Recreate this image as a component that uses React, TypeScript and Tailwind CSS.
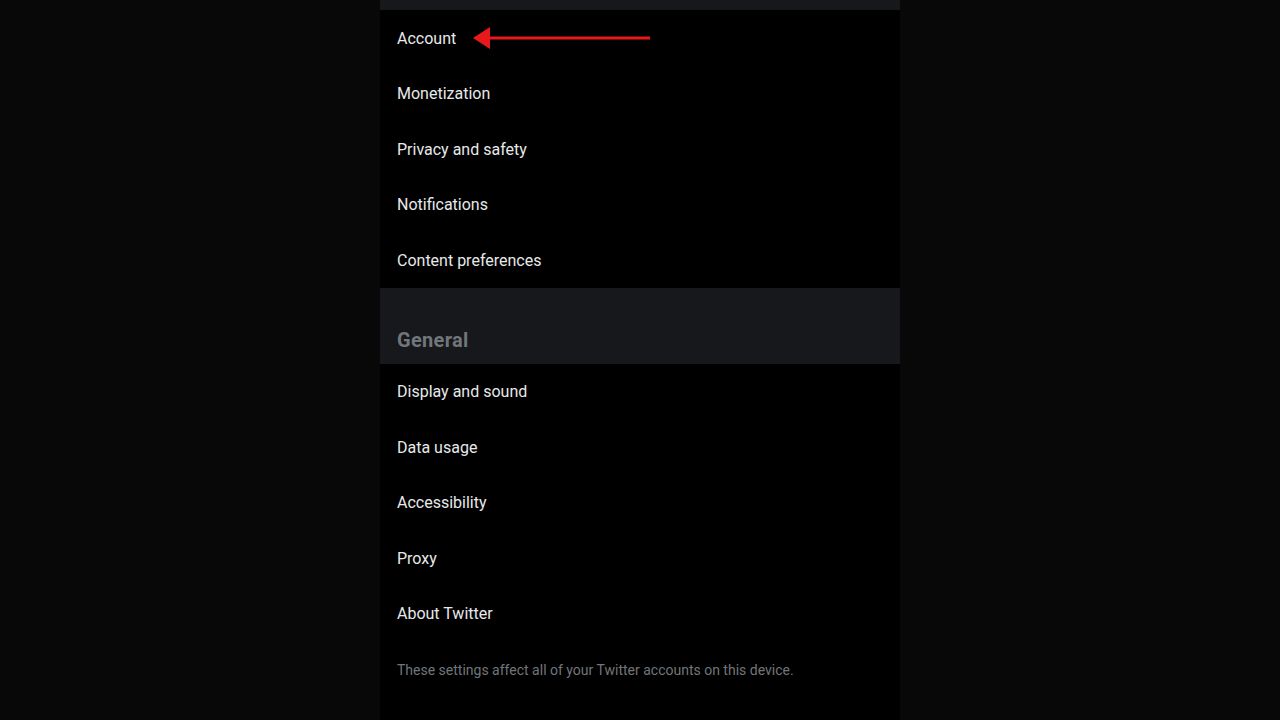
import React from "react";

const topItems = ["Account", "Monetization", "Privacy and safety", "Notifications", "Content preferences"];
const generalItems = ["Display and sound", "Data usage", "Accessibility", "Proxy", "About Twitter"];

function Row({ label, children }: { label: string; children?: React.ReactNode }) {
  return (
    <div className="relative h-[55.5px] flex items-center px-[17px] pt-[2px] text-[16px] text-[#e7e9ea]">
      {label}
      {children}
    </div>
  );
}

export default function App() {
  return (
    <div className="w-[1280px] h-[720px] bg-[#080808] flex justify-center overflow-hidden" style={{ fontFamily: "Roboto, 'Liberation Sans', sans-serif" }}>
      <div className="w-[520px] h-full bg-black flex flex-col">
        <div className="h-[10px] bg-[#16181c]" />
        {topItems.map((item, i) => (
          <Row key={item} label={item}>
            {i === 0 && (
              <svg className="absolute left-[93px] top-[17px]" width="180" height="24" viewBox="0 0 180 24">
                <polygon points="0,11 17,0 17,22" fill="#e8191a" />
                <rect x="14" y="9.5" width="163" height="3" fill="#e8191a" />
              </svg>
            )}
          </Row>
        ))}
        <div className="h-[76px] bg-[#16181c] flex items-end px-[17px] pb-[9px]">
          <span className="text-[20px] font-bold text-[#71767b] tracking-[0.3px]">General</span>
        </div>
        {generalItems.map((item) => (
          <Row key={item} label={item} />
        ))}
        <div className="px-[17px] pt-[19px] text-[14px] text-[#71767b]">
          These settings affect all of your Twitter accounts on this device.
        </div>
      </div>
    </div>
  );
}
